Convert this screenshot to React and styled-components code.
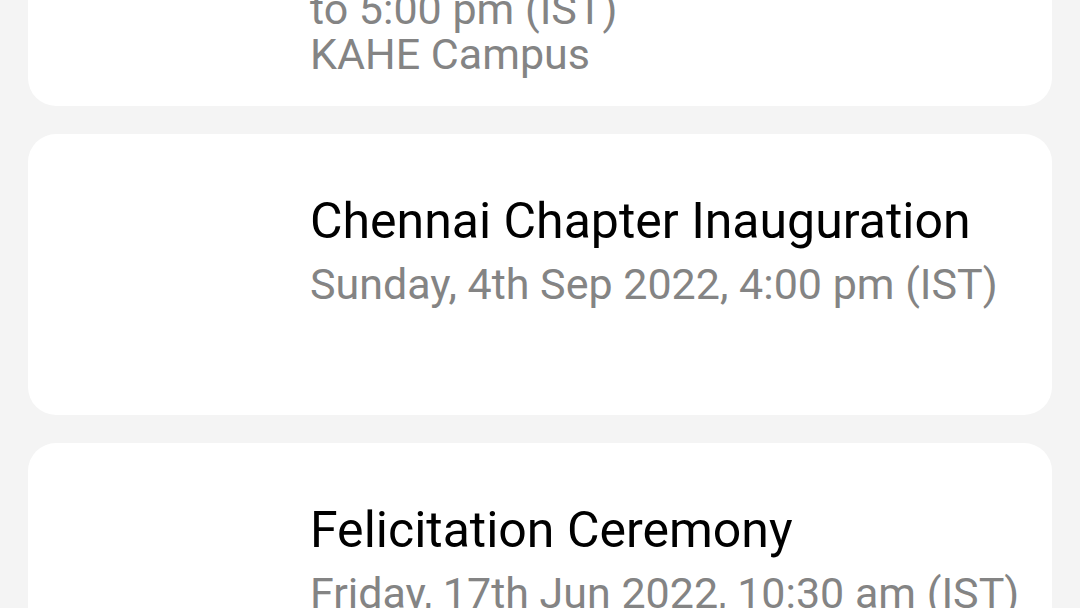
import { useLayoutEffect, useRef } from "react";
import styled, { createGlobalStyle } from "styled-components";

const GlobalStyle = createGlobalStyle`
  html, body {
    margin: 0;
    padding: 0;
    background: #f4f4f4;
    font-family: Roboto, "Noto Sans", "Liberation Sans", sans-serif;
  }
  * {
    box-sizing: border-box;
  }
`;

const events = [
  {
    title: "Coimbatore Chapter Meet",
    date: ["Saturday, 27th Aug 2022, 10:00 am", "to 5:00 pm (IST)"],
    venue: "KAHE Campus",
  },
  {
    title: "Chennai Chapter Inauguration",
    date: ["Sunday, 4th Sep 2022, 4:00 pm (IST)"],
  },
  {
    title: "Felicitation Ceremony",
    date: ["Friday, 17th Jun 2022, 10:30 am (IST)"],
  },
  {
    title: "Annual General Meeting",
    date: ["Saturday, 21st May 2022, 11:00 am (IST)"],
  },
];

const App = () => {
  const listRef = useRef(null);

  // the list is shown scrolled part way down
  useLayoutEffect(() => {
    if (listRef.current) listRef.current.scrollTop = 214;
  }, []);

  return (
    <>
      <GlobalStyle />
      <Screen ref={listRef}>
        <List>
          {events.map((ev) => (
            <Card key={ev.title}>
              <Thumb />
              <Info>
                <Title>{ev.title}</Title>
                {ev.date.map((line) => (
                  <Meta key={line}>{line}</Meta>
                ))}
                {ev.venue && <Meta>{ev.venue}</Meta>}
              </Info>
            </Card>
          ))}
        </List>
      </Screen>
    </>
  );
};

export default App;

const Screen = styled.div`
  height: 100vh;
  overflow-y: auto;
  background: #f4f4f4;
  scrollbar-width: none;

  &::-webkit-scrollbar {
    display: none;
  }
`;

const List = styled.div`
  display: flex;
  flex-direction: column;
  gap: 28px;
  padding: 28px;
`;

const Card = styled.section`
  display: flex;
  align-items: flex-start;
  gap: 28px;
  background: #ffffff;
  border-radius: 28px;
  padding: 28px 20px 28px 28px;
`;

const Thumb = styled.div`
  flex: 0 0 226px;
  height: 225px;
  border-radius: 16px;
  background: #ffffff;
`;

const Info = styled.div`
  display: flex;
  flex-direction: column;
  flex: 1;
  min-width: 0;
  padding: 29px 0 1px;
`;

const Title = styled.h2`
  margin: 0 0 11px;
  font-size: 50px;
  line-height: 60px;
  font-weight: 400;
  color: #000000;
  white-space: nowrap;
`;

const Meta = styled.p`
  margin: 0;
  font-size: 43px;
  line-height: 45px;
  color: #848484;
  white-space: nowrap;
`;
